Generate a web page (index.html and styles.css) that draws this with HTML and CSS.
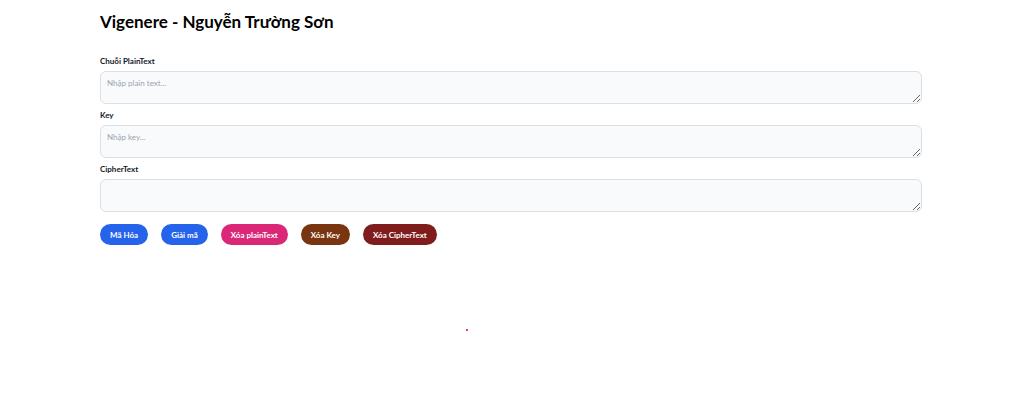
FILE: index.html
```html
<!DOCTYPE html>
<html lang="vi">
<head>
<meta charset="utf-8">
<title>Vigenere</title>
<link rel="stylesheet" href="styles.css">
</head>
<body>
<main class="page">
  <h1 class="title">Vigenere - Nguyễn Trường Sơn</h1>
  <div class="field">
    <label class="label" for="plain">Chuỗi PlainText</label>
    <textarea id="plain" class="input" placeholder="Nhập plain text..."></textarea>
  </div>
  <div class="field">
    <label class="label" for="key">Key</label>
    <textarea id="key" class="input" placeholder="Nhập key..."></textarea>
  </div>
  <div class="field">
    <label class="label" for="cipher">CipherText</label>
    <textarea id="cipher" class="input"></textarea>
  </div>
  <div class="actions">
    <button class="btn btn-blue">Mã Hóa</button>
    <button class="btn btn-blue">Giải mã</button>
    <button class="btn btn-pink">Xóa plainText</button>
    <button class="btn btn-brown">Xóa Key</button>
    <button class="btn btn-red">Xóa CipherText</button>
  </div>
</main>
<span class="dot"></span>
</body>
</html>
```
FILE: styles.css
```css
html, body {
  margin: 0;
  padding: 0;
  background: #ffffff;
}
body {
  font-family: Lato, "Noto Sans", sans-serif;
  color: #111827;
  position: relative;
  min-height: 419px;
}
.page {
  padding: 10px 102px 0 100px;
}
.title {
  margin: 0 0 21px 0;
  font-size: 17px;
  line-height: 24px;
  font-weight: 700;
  color: #000;
}
.field {
  display: flex;
  flex-direction: column;
  margin-bottom: 5px;
}
.label {
  font-size: 8px;
  line-height: 12px;
  font-weight: 700;
  color: #111827;
  margin-bottom: 4px;
}
.input {
  display: block;
  box-sizing: border-box;
  width: 100%;
  height: 33px;
  margin: 0;
  padding: 6px 6px;
  font-family: inherit;
  font-size: 8px;
  line-height: 11px;
  background: #f9fafb;
  border: 1px solid #dcdfe4;
  border-radius: 6px;
  color: #111827;
}
.input::placeholder {
  color: #9ca3af;
}
.actions {
  display: flex;
  gap: 13px;
  margin-top: 12px;
}
.btn {
  height: 21px;
  padding: 0 10px;
  border: none;
  border-radius: 11px;
  font-family: inherit;
  font-size: 8px;
  font-weight: 700;
  color: #ffffff;
  cursor: pointer;
}
.btn-blue { background: #2563eb; }
.btn-pink { background: #db2777; }
.btn-brown { background: #78350f; }
.btn-red { background: #7f1d1d; }
.dot {
  position: absolute;
  left: 466px;
  top: 329px;
  width: 2px;
  height: 2px;
  background: #ef4444;
}
```
